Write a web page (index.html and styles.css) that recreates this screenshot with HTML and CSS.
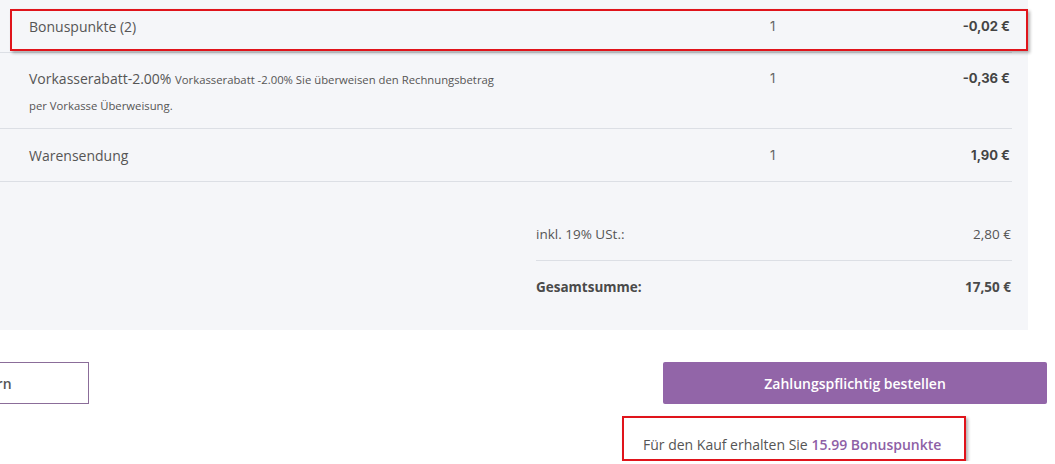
FILE: index.html
```html
<!DOCTYPE html>
<html lang="de">
<head>
	<meta charset="UTF-8">
	<title>Bestellübersicht</title>
	<link rel="stylesheet" href="styles.css">
</head>
<body>
<div class="summary">
	<div class="items">
		<div class="row marked">
			<div class="name">Bonuspunkte (2)</div>
			<div class="qty">1</div>
			<div class="price">-0,02 €</div>
		</div>
		<div class="row tall">
			<div class="name">Vorkasserabatt-2.00% <small>Vorkasserabatt -2.00% Sie überweisen den Rechnungsbetrag per Vorkasse Überweisung.</small></div>
			<div class="qty">1</div>
			<div class="price">-0,36 €</div>
		</div>
		<div class="row">
			<div class="name">Warensendung</div>
			<div class="qty">1</div>
			<div class="price">1,90 €</div>
		</div>
	</div>
	<div class="totals">
		<div class="total">
			<span>inkl. 19% USt.:</span>
			<span>2,80 €</span>
		</div>
		<div class="total strong">
			<span>Gesamtsumme:</span>
			<span>17,50 €</span>
		</div>
	</div>
</div>
<div class="actions">
	<button class="btn back" type="button">Warenkorb ändern</button>
	<div class="order">
		<button class="btn buy" type="button">Zahlungspflichtig bestellen</button>
		<p class="bonus">Für den Kauf erhalten Sie <b>15.99 Bonuspunkte</b></p>
	</div>
</div>
</body>
</html>
```

FILE: styles.css
```css
* {
	box-sizing: border-box;
}
body {
	margin: 0;
	font-family: "Open Sans", "Liberation Sans", sans-serif;
	font-size: 14px;
	color: #555;
	background: #fff;
	overflow: hidden;
}
.summary {
	width: 1028px;
	height: 330px;
	background: #f5f6f9;
}
.items {
	margin-right: 16px;
}
.row {
	position: relative;
	display: grid;
	grid-template-columns: 470px 1fr 40px 200px;
	align-items: center;
	height: 53px;
	padding: 0 2px 0 29px;
	border-bottom: 1px solid #dcdfe5;
}
.row.tall {
	height: 76px;
	align-items: start;
	padding-top: 13px;
	line-height: 25px;
}
.row.marked::after {
	content: "";
	position: absolute;
	left: 10px;
	top: 9px;
	width: 1014px;
	height: 38px;
	border: 2px solid #e0141b;
	box-shadow: 2px 2px 3px rgba(0, 0, 0, 0.3);
}
.name small {
	font-size: 11.3px;
}
.qty {
	grid-column: 3;
	font-family: "Inter", "Liberation Sans", sans-serif;
	font-size: 13px;
	color: #666;
}
.price {
	text-align: right;
	font-family: "Inter", "Liberation Sans", sans-serif;
	font-size: 13px;
	font-weight: 700;
	color: #444;
}
.totals {
	margin: 0 16px 0 536px;
	padding-top: 26px;
}
.total {
	display: flex;
	justify-content: space-between;
	padding: 14px 1px 14px 0;
	line-height: 24px;
	font-size: 13.5px;
}
.total:first-child {
	border-bottom: 1px solid #dcdfe5;
}
.total.strong {
	font-weight: 700;
	color: #4a4a4a;
}
.actions {
	display: flex;
	justify-content: space-between;
	align-items: flex-start;
	margin-top: 32px;
}
.btn {
	height: 42px;
	font-family: "Open Sans", "Liberation Sans", sans-serif;
	font-size: 14px;
	font-weight: 600;
	cursor: pointer;
}
.back {
	width: 289px;
	margin-left: -200px;
	padding-left: 12px;
	border: 1px solid #8b6d99;
	background: #fff;
	color: #555;
}
.order {
	width: 392px;
}
.buy {
	display: block;
	width: 384px;
	border: 0;
	border-radius: 2px;
	background: #9265a8;
	color: #fff;
}
.bonus {
	width: 344px;
	height: 45px;
	margin: 12px 0 0 -41px;
	padding: 17px 0 3px 19px;
	border: 2px solid #e0141b;
	box-shadow: 2px 2px 3px rgba(0, 0, 0, 0.3);
	line-height: 20px;
}
.bonus b {
	font-weight: 600;
	color: #8e5fa6;
}
```
